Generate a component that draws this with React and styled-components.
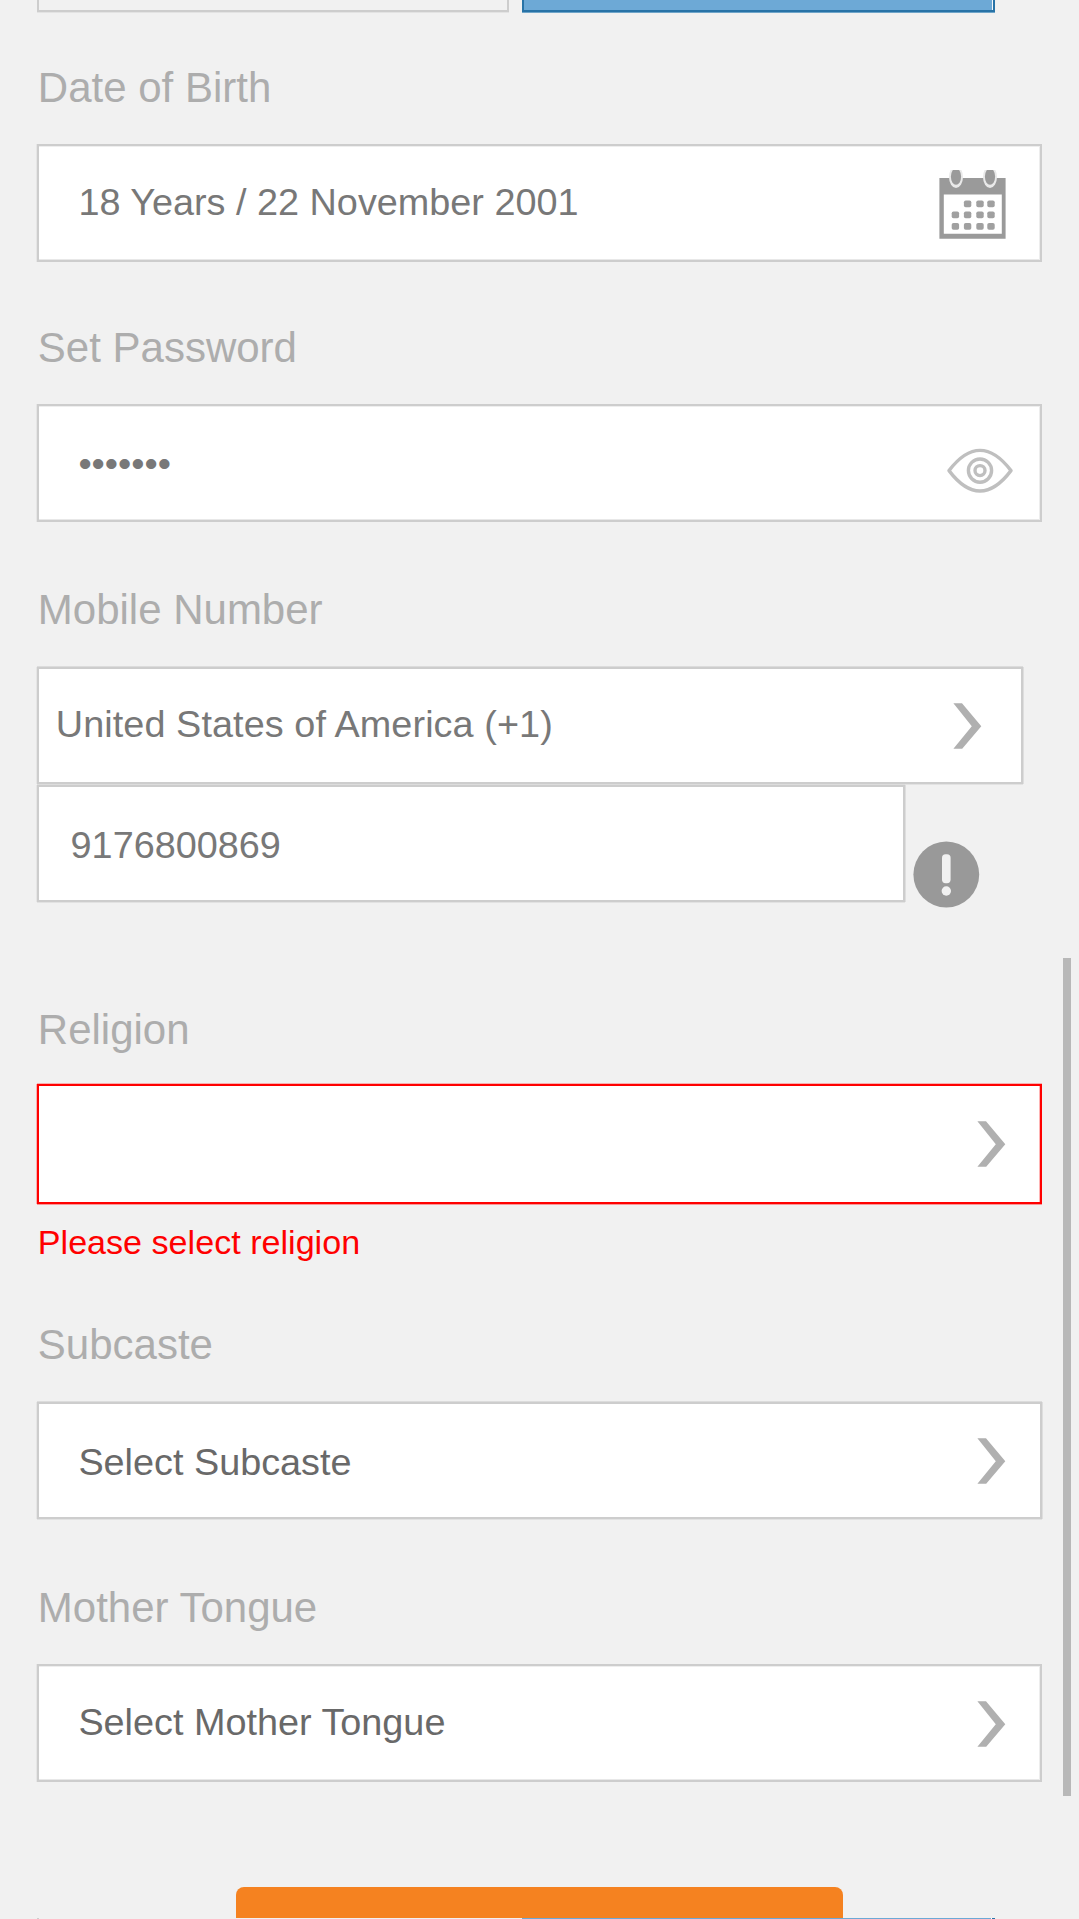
import React from "react";
import styled, { createGlobalStyle, css } from "styled-components";

const GlobalStyle = createGlobalStyle`
  * { box-sizing: border-box; }
  html, body { margin: 0; padding: 0; background: #f1f1f1; }
  body { font-family: "Liberation Sans", Arial, sans-serif; }
`;

const Page = styled.main`
  position: relative;
  width: 1079px;
  height: 1919px;
  overflow: hidden;
  background: #f1f1f1;
  display: flex;
  flex-direction: column;
  padding-left: 37px;
`;

const ToggleRow = styled.div`
  display: flex;
  gap: 13px;
  height: 13px;
  overflow: hidden;
`;

const Toggle = styled.div`
  width: ${(p) => (p.$selected ? 473 : 472)}px;
  height: 12px;
  border: 2px solid #cdcdcd;
  border-top: 0;
  box-shadow: 0 1px 0 #e3e3e3;
  ${(p) =>
    p.$selected &&
    css`
      background: #6da9d6;
      border-color: #2873a7;
      box-shadow: 0 1px 0 #6fa5c9, inset -1px 0 0 #f4f8fb;
    `}
`;

const Field = styled.section`
  margin-top: ${(p) => p.$gap}px;
  display: flex;
  flex-direction: column;
  align-items: flex-start;
`;

const Label = styled.label`
  height: 48px;
  line-height: 48px;
  padding-left: 0.8px;
  font-size: 42px;
  color: #adadad;
  white-space: nowrap;
  margin-bottom: ${(p) => p.$space ?? 32}px;
`;

const edges = {
  inner: "-1px 0 0 #e6e6e6, inset -1px 0 0 #ededed, inset 0 1px 0 #eeeeee, inset 0 -1px 0 #e8e8e8",
  outer: "-1px 0 0 #e6e6e6, 0 1px 0 #e2e2e2, 0 -1px 0 #dcdcdc, 1px 0 0 #dedede",
  error: "-1px 0 0 #f7b0b0, 0 1px 0 #f99797, 0 -1px 0 #f7b0b0, inset -1px 0 0 #ffb4b4",
};

const Box = styled.div`
  width: ${(p) => p.$width ?? 1005}px;
  height: ${(p) => p.$height ?? 118}px;
  margin-top: ${(p) => p.$offset ?? 0}px;
  border: 2px solid ${(p) => (p.$edge === "error" ? "#ff0000" : "#cdcdcd")};
  box-shadow: ${(p) => edges[p.$edge ?? "inner"]};
  background: #fff;
  display: flex;
  align-items: flex-start;
  justify-content: space-between;
  padding: 0 ${(p) => p.$right ?? 34}px 0 ${(p) => p.$left ?? 39.4}px;
`;

const Value = styled.span`
  font-size: 37.8px;
  line-height: 42px;
  margin-top: ${(p) => p.$top ?? 35}px;
  color: ${(p) => (p.$dark ? "#696969" : "#787878")};
  letter-spacing: ${(p) => p.$tracking ?? 0}px;
  white-space: nowrap;
`;

const Icon = styled.svg`
  display: block;
  flex: none;
  margin-top: ${(p) => p.$top}px;
`;

const NumberRow = styled.div`
  display: flex;
  gap: 8px;
`;

const ErrorText = styled.p`
  margin: 18px 0 0;
  padding-left: 0.8px;
  height: 40px;
  line-height: 40px;
  font-size: 34.125px;
  color: #ff0000;
  white-space: nowrap;
`;

const Submit = styled.button`
  margin: 105px 0 0 199px;
  padding: 0;
  width: 607px;
  height: 31px;
  flex: none;
  border: 0;
  border-radius: 8px 8px 0 0;
  background: #f58220;
`;

const NextRow = styled.div`
  display: flex;
  height: 1px;
  flex: none;
`;

const Strip = styled.span`
  width: ${(p) => p.$width}px;
  height: 1px;
  background: ${(p) => p.$color};
`;

const ScrollThumb = styled.div`
  position: absolute;
  left: 1063px;
  top: 958px;
  width: 8px;
  height: 838px;
  background: #b8b8b8;
`;

const Chevron = ({ top = 34 }) => (
  <Icon $top={top} width="30" height="48" viewBox="0 0 30 48">
    <path d="M1.4 1.2H10L29.3 24.2L10.2 46.8H1.4L19.8 24.2Z" fill="#b0b0b0" />
  </Icon>
);

const Calendar = () => (
  <Icon $top={24} width="67" height="69" viewBox="0 0 67 69">
    <path d="M0.4 8H66.6V68.7H0.4Z" fill="#9a9a9a" />
    <path d="M4.8 24.6H62.8V63.8H4.8Z" fill="#fff" />
    {[17, 51].map((x) => (
      <g key={x}>
        <ellipse cx={x} cy="7" rx="7" ry="11" fill="#e9e9e9" />
        <ellipse cx={x} cy="6.6" rx="5.1" ry="8.2" fill="#9a9a9a" />
      </g>
    ))}
    {[
      [28.6, 33.9], [41, 33.9], [52, 33.9],
      [16.4, 44.9], [28.6, 44.9], [41, 44.9], [52, 44.9],
      [16.4, 56.4], [28.6, 56.4], [41, 56.4], [52, 56.4],
    ].map(([x, y]) => (
      <rect key={`${x}-${y}`} x={x - 3.7} y={y - 3.4} width="7.4" height="6.8" rx="1.8" fill="#a0a0a0" />
    ))}
  </Icon>
);

const Eye = () => (
  <Icon $top={42} width="66" height="46" viewBox="0 0 66 46" fill="none" stroke="#bfbfbf" strokeWidth="3.4">
    <path d="M2 22.6C12 9.5 22 2.4 33 2.4S54 9.5 64 22.6C54 35.8 44 43 33 43S12 35.8 2 22.6Z" strokeLinejoin="round" />
    <circle cx="33" cy="22.6" r="11.6" />
    <circle cx="33" cy="22.6" r="5" />
  </Icon>
);

const Alert = () => (
  <Icon $top={57} width="67" height="67" viewBox="0 0 67 67">
    <circle cx="33.3" cy="33.5" r="32.9" fill="#999" />
    <rect x="29" y="13.2" width="8.6" height="29" rx="3.6" fill="#f1f1f1" />
    <circle cx="33.3" cy="50" r="4.7" fill="#f1f1f1" />
  </Icon>
);

export default function App() {
  return (
    <>
      <GlobalStyle />
      <Page>
        <ToggleRow>
          <Toggle />
          <Toggle $selected />
        </ToggleRow>

        <Field $gap={51}>
          <Label>Date of Birth</Label>
          <Box>
            <Value>18 Years / 22 November 2001</Value>
            <Calendar />
          </Box>
        </Field>

        <Field $gap={62}>
          <Label>Set Password</Label>
          <Box $right={27}>
            <Value $top={36}>•••••••</Value>
            <Eye />
          </Box>
        </Field>

        <Field $gap={64}>
          <Label $space={33}>Mobile Number</Label>
          <Box $edge="outer" $width={986} $height={117} $left={16.8} $right={39}>
            <Value $top={34} $tracking={0.08}>United States of America (+1)</Value>
            <Chevron top={33} />
          </Box>
          <NumberRow>
            <Box $edge="outer" $width={868} $height={117} $offset={1} $left={31.6}>
              <Value $top={37}>9176800869</Value>
            </Box>
            <Alert />
          </NumberRow>
        </Field>

        <Field $gap={98}>
          <Label $space={30}>Religion</Label>
          <Box $edge="error" $height={120}>
            <Value />
            <Chevron />
          </Box>
          <ErrorText>Please select religion</ErrorText>
        </Field>

        <Field $gap={59}>
          <Label $space={33}>Subcaste</Label>
          <Box $edge="outer" $height={117}>
            <Value $dark $top={37}>Select Subcaste</Value>
            <Chevron top={33} />
          </Box>
        </Field>

        <Field $gap={65}>
          <Label>Mother Tongue</Label>
          <Box>
            <Value $dark>Select Mother Tongue</Value>
            <Chevron />
          </Box>
        </Field>

        <Submit aria-label="Submit" />
        <NextRow>
          <Strip $width={2} $color="#cdcdcd" />
          <Strip $width={470} $color="#f1f1f1" />
          <Strip $width={13} $color="#f1f1f1" />
          <Strip $width={469} $color="#6da9d6" />
          <Strip $width={1} $color="#ffffff" />
          <Strip $width={3} $color="#2873a7" />
        </NextRow>
        <ScrollThumb />
      </Page>
    </>
  );
}
